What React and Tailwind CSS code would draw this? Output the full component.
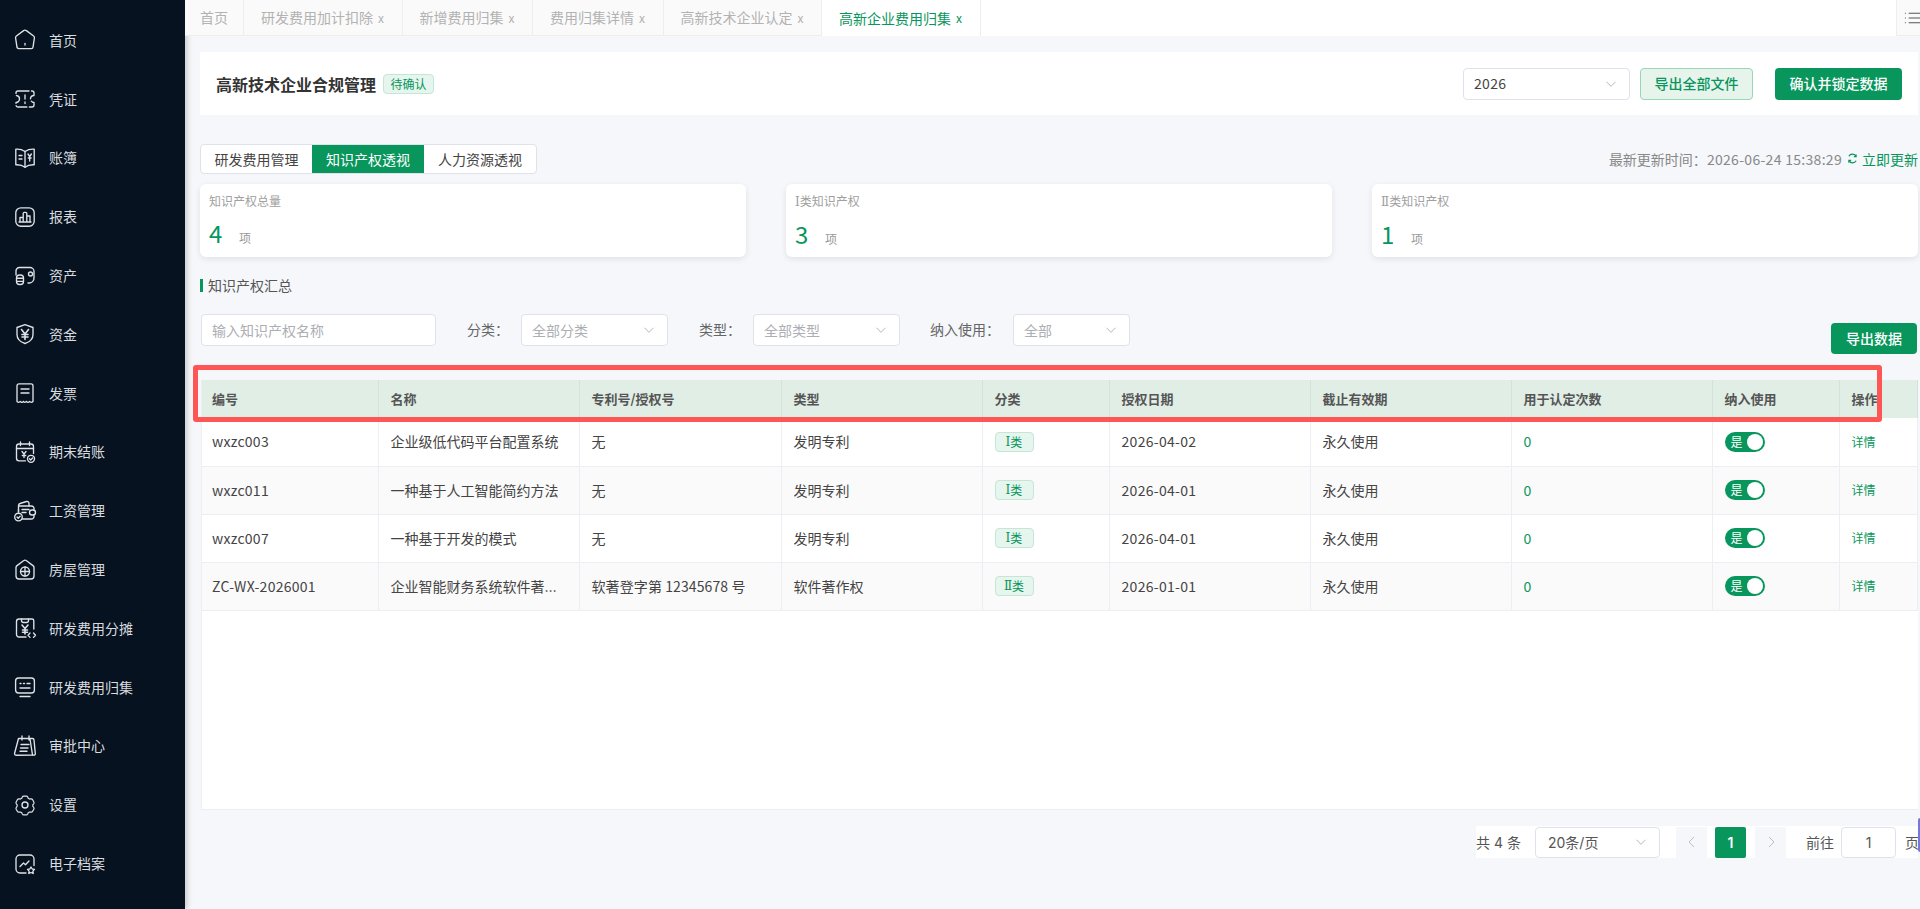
import React from "react";

const Ic = ({ children }) => (
  <svg width="24" height="24" viewBox="0 0 24 24" fill="none" stroke="#dfe2e6" strokeWidth="1.35" strokeLinecap="round" strokeLinejoin="round" className="shrink-0">
    {children}
  </svg>
);

const icons = [
  <Ic><path d="M10.6 2.6 3.4 8a2 2 0 0 0-.8 2l1.3 8.6A2 2 0 0 0 5.9 20.6h12.2a2 2 0 0 0 2-1.9L21.400 10a2 2 0 0 0-.8-2l-7.200-5.400a2.400 2.400 0 0 0-2.800 0Z" /><path d="M12 15.500v1.500" /></Ic>,
  <Ic><path d="M5 4h14a2 2 0 0 1 2 2v2.500a3.500 3.500 0 0 0 0 7V18a2 2 0 0 1-2 2H5a2 2 0 0 1-2-2v-2.500a3.500 3.500 0 0 0 0-7V6a2 2 0 0 1 2-2Z" strokeDasharray="11 2.500" /><path d="M12 8v4M12 15v1.500" /></Ic>,
  <Ic><path d="M12 5.500C9.500 3.800 6 3 2.800 3.200v15.600c3.400-.2 6.800.6 9.200 2.400 2.400-1.800 5.800-2.600 9.200-2.400V3.200C18 3 14.500 3.800 12 5.500Z" /><path d="M12 5.500v15.700M6 9.500h3M6 13h3M15 8l1.700 2.500L18.400 8M16.700 10.500V15M15.300 12h2.800" /></Ic>,
  <Ic><rect x="2.800" y="2.800" width="18.400" height="18.400" rx="5" /><path d="M7 17v-4.500h3.200V17M10.200 17V8.500a1.200 1.200 0 0 1 1.200-1.200h1.200a1.200 1.200 0 0 1 1.200 1.200V17M13.800 17v-6h3.200v6M6 17h12" /></Ic>,
  <Ic><path d="M3 11V7a3.500 3.500 0 0 1 3.500-3.500H17A4 4 0 0 1 21 7.500V14a5 5 0 0 1-4.500 5H15" /><circle cx="17.500" cy="10" r="2" /><rect x="3.500" y="11" width="7" height="9.500" rx="3" /><path d="M3.800 14.200h6.400M3.800 17.300h6.400" /></Ic>,
  <Ic><path d="M12 2.600 4 5.500v7c0 4.500 3.500 7.500 8 9 4.500-1.500 8-4.500 8-9v-7L12 2.600Z" /><path d="m8.500 7.500 3.500 4.500 3.500-4.500M12 12v5.500M9 12.500h6M9 15h6" strokeWidth="1.600" /></Ic>,
  <Ic><path d="M6 2.800h12a2 2 0 0 1 2 2v15.600c-1.200 1.200-2.300 1.200-3.300 0-1.200 1.300-2.300 1.300-3.300 0-1 1.200-2 1.200-2.900 0-1 1.300-2.100 1.300-3.200 0-1 1.200-2.100 1.200-3.300 0V4.800a2 2 0 0 1 2-2Z" /><path d="M8 8h8M8 12h8" /></Ic>,
  <Ic><path d="M12.500 20.800H6a2.500 2.500 0 0 1-2.500-2.500V6.500A2.500 2.500 0 0 1 6 4h12a2.500 2.500 0 0 1 2.500 2.500v7" /><path d="M7.500 2v3.500M16.500 2v3.500M3.500 8.500h17M9 11.500l2 2.500 2-2.500M11 14v3.500M9.300 15.500h3.400" /><circle cx="18" cy="18.800" r="3.500" /><path d="m16.500 18.800 1.200 1.200 1.900-2" /></Ic>,
  <Ic><path d="M5.500 13V6.500a2 2 0 0 1 1.500-2L13.500 2.500a2 2 0 0 1 2.500 2V7" /><path d="M6 7h12.500a2.500 2.500 0 0 1 2.500 2.500v1.500M21 16v1.500a2.500 2.500 0 0 1-2.500 2.500H9.500M5.500 13 5.500 10.500" /><path d="M9 10.500h7M9 13.500h4" /><rect x="16.500" y="11" width="6" height="5" rx="2.500" /><circle cx="5.500" cy="18" r="3.800" /><path d="m4 18 1.200 1.200 1.900-2" /></Ic>,
  <Ic><path d="M10.500 2.700 4 7.600A2.500 2.500 0 0 0 3 9.600V18a3 3 0 0 0 3 3h12a3 3 0 0 0 3-3V9.600a2.500 2.500 0 0 0-1-2l-6.500-4.900a2.500 2.500 0 0 0-3 0Z" /><circle cx="12" cy="13.500" r="4.500" /><path d="M7.500 13.500h9M12 9v9" /></Ic>,
  <Ic><path d="M13 21H6a2.500 2.500 0 0 1-2.500-2.500v-13A2.500 2.500 0 0 1 6 3h13a1.800 1.800 0 0 1 1.800 1.800V13" /><path d="M8.500 3v1.500a2 2 0 0 0 2 2h3a2 2 0 0 0 2-2V3" /><path d="m9 9 3 3.500 3-3.500M12 12.500V18M9.500 14h5M9.500 16.300h5" strokeWidth="1.600" /><path d="m17 17-2 2.200 2 2.200M20.500 17l2 2.200-2 2.200" /></Ic>,
  <Ic><rect x="2.600" y="3" width="18.800" height="15" rx="3" /><path d="M7 8.500h1M10.500 8.500h1M14 8.500h3M7 13h10M7 21.500h10" /></Ic>,
  <Ic><path d="M5.500 4.500h14a1.500 1.500 0 0 1 1.500 1.500l1.300 13.500a1.500 1.500 0 0 1-1.500 1.700H3a1.500 1.500 0 0 1-1.400-1.900L5.500 4.500Z" /><path d="M9 2v4M16 2v4M19.500 20.800 17 5M8 10.500h8M7.500 14h7.500M7 17.200h7" /></Ic>,
  <Ic><path d="M9 3.200c.3-.6 1-1 1.600-1h2.800c.7 0 1.300.4 1.600 1l.6 1.300 1.500.9 1.400-.2a2 2 0 0 1 2 1l1.300 2.400a2 2 0 0 1-.2 2.100l-.9 1.100v1.600l.9 1.200c.5.600.6 1.400.2 2.100l-1.300 2.300a2 2 0 0 1-2 1l-1.400-.2-1.500.9-.6 1.300c-.3.600-.9 1-1.600 1h-2.800c-.6 0-1.300-.4-1.600-1l-.6-1.300-1.500-.9-1.400.2a2 2 0 0 1-2-1l-1.300-2.300a2 2 0 0 1 .2-2.100l.9-1.200v-1.600l-.9-1.100a2 2 0 0 1-.2-2.100l1.300-2.400a2 2 0 0 1 2-1l1.400.2 1.500-.9.600-1.300Z" transform="translate(1.200 1.200) scale(.9)" /><circle cx="12" cy="12" r="3" /></Ic>,
  <Ic><path d="M13 21H7a4 4 0 0 1-4-4V7a4 4 0 0 1 4-4h10a4 4 0 0 1 4 4v6.500" /><path d="m7 14.500 3.500-3.500 2 1.800 3.500-3.800" /><path d="m18 15 1.200 2 2.300.4-1.600 1.700.3 2.400-2.200-1-2.200 1 .3-2.400-1.600-1.700 2.300-.4 1.200-2Z" /></Ic>,
];

const menu = ["首页", "凭证", "账簿", "报表", "资产", "资金", "发票", "期末结账", "工资管理", "房屋管理", "研发费用分摊", "研发费用归集", "审批中心", "设置", "电子档案"];

const tabs = [
  ["首页", false, false],
  ["研发费用加计扣除", true, false],
  ["新增费用归集", true, false],
  ["费用归集详情", true, false],
  ["高新技术企业认定", true, false],
  ["高新企业费用归集", true, true],
];

const Chevron = ({ className = "" }) => (
  <svg width="12" height="12" viewBox="0 0 12 12" fill="none" stroke="#b4b8c0" strokeWidth="1" className={className}>
    <path d="M1.500 3.800 6 8.300l4.500-4.500" />
  </svg>
);

const Select = ({ text, w, muted = true }) => (
  <div className={`flex h-[32px] items-center justify-between rounded-[4px] border border-[#dfe2ea] bg-white pl-[10px] pr-[12px] ${w}`}>
    <span className={muted ? "text-[14px] text-[#acaeb3]" : "text-[14px] tracking-[0.3px] text-[#444]"}>{text}</span>
    <Chevron />
  </div>
);

const Roman = ({ children }) => (
  <span className="font-['DejaVu_Serif','Noto_Sans_CJK_SC',serif]">{children}</span>
);

const Card = ({ label, value }) => (
  <div className="h-[73px] rounded-[6px] bg-white pl-[9px] pt-[8px] shadow-[0_2px_6px_rgba(0,0,0,0.09)]">
    <div className="text-[12px] leading-[18px] text-[#a0a0a0]">{label}</div>
    <div className="mt-[5px] flex items-baseline">
      <span className="w-[30px] text-[24px] leading-[36px] text-[#08965c]">{value}</span>
      <span className="text-[12px] text-[#999]">项</span>
    </div>
  </div>
);

const colW = ["w-[176px]", "w-[201px]", "w-[202px]", "w-[201px]", "w-[127px]", "w-[201px]", "w-[201px]", "w-[201px]", "w-[127px]", ""];
const headers = ["编号", "名称", "专利号/授权号", "类型", "分类", "授权日期", "截止有效期", "用于认定次数", "纳入使用", "操作"];
const rows = [
  ["wxzc003", "企业级低代码平台配置系统", "无", "发明专利", "Ⅰ", "2026-04-02"],
  ["wxzc011", "一种基于人工智能简约方法", "无", "发明专利", "Ⅰ", "2026-04-01"],
  ["wxzc007", "一种基于开发的模式", "无", "发明专利", "Ⅰ", "2026-04-01"],
  ["ZC-WX-2026001", "企业智能财务系统软件著作权", "软著登字第 12345678 号", "软件著作权", "Ⅱ", "2026-01-01"],
];

const cell = "border-r border-[#eceef4] px-[12px] text-left font-normal first:pl-[10px]";

export default function App() {
  return (
    <div className="relative flex h-[909px] w-[1920px] overflow-hidden bg-[#f5f7fa] font-['Noto_Sans_CJK_SC',sans-serif] text-[14px] text-[#333]">
      <aside className="flex w-[185px] shrink-0 flex-col bg-[#06121f] pl-[13px] pt-[11px] shadow-[2px_0_6px_rgba(0,0,0,0.2)]">
        {menu.map((m, i) => (
          <div key={m} className="flex h-[58.8px] shrink-0 items-center gap-[12px] text-[14px] text-[#d8dbdf]">
            {icons[i]}
            <span>{m}</span>
          </div>
        ))}
      </aside>

      <main className="flex min-w-0 flex-1 flex-col">
        <div className="flex h-[36px] shrink-0 bg-white">
          {tabs.map(([t, closable, active], i) => (
            <div key={t} className={`flex items-center whitespace-nowrap border-r border-[#eeeeee] ${i === 0 ? "px-[15px]" : "pl-[17px] pr-[16px]"} ${active ? "bg-white text-[#08965c]" : "border-b bg-[#fafafa] text-[#b2b2b2]"}`}>
              <span>{t}</span>
              {closable && <span className="ml-[5px] w-[7.5px] text-[12px] leading-none">x</span>}
            </div>
          ))}
          <div className="flex-1" />
          <div className="flex w-[24px] items-center justify-center border-b border-l border-[#eeeeee] bg-[#fafafa] pl-[6px]">
            <svg width="18" height="18" viewBox="0 0 18 18" fill="none" stroke="#555" strokeWidth="1.200">
              <path d="M2 4h1M2 9h1M2 14h1M6 4h12M6 9h12M6 14h12" />
            </svg>
          </div>
        </div>

        <div className="flex min-h-0 flex-1 flex-col pl-[15px] pr-[2px]">
          <div className="mt-[16px] flex h-[63px] shrink-0 items-center bg-white pl-[16px] pr-[15px]">
            <span className="text-[16px] font-semibold text-[#333]">高新技术企业合规管理</span>
            <span className="ml-[7px] flex h-[20px] w-[51px] items-center justify-center rounded-[4px] border border-[#c4e6d5] bg-[#e6f5ed] text-[12px] text-[#08965c]">待确认</span>
            <div className="flex-1" />
            <Select text="2026" w="w-[167px]" muted={false} />
            <button className="ml-[10px] h-[32px] w-[113px] rounded-[4px] border border-[#9bd5b9] bg-[#e6f4ec] text-[14px] font-medium text-[#08965c]">导出全部文件</button>
            <button className="ml-[22px] mr-[1px] h-[32px] w-[127px] rounded-[4px] bg-[#08965c] text-[14px] font-medium text-white">确认并锁定数据</button>
          </div>

          <div className="mt-[29px] flex h-[30px] shrink-0 items-center justify-between">
            <div className="flex h-[30px] overflow-hidden rounded-[4px] border border-[#dfe2ea] bg-white text-[14px]">
              <div className="flex w-[111px] items-center justify-center text-[#444]">研发费用管理</div>
              <div className="flex w-[112px] items-center justify-center bg-[#08965c] text-white">知识产权透视</div>
              <div className="flex w-[112px] items-center justify-center text-[#444]">人力资源透视</div>
            </div>
            <div className="flex items-center text-[14px] text-[#888]">
              <span>最新更新时间：</span>
              <span className="tracking-[0.3px]">2026-06-24 15:38:29</span>
              <svg width="11" height="11" viewBox="0 0 24 24" fill="none" stroke="#08965c" strokeWidth="2.500" className="mb-[2px] ml-[5px]">
                <path d="M20 8a9 9 0 0 0-16-1M4 16a9 9 0 0 0 16 1M20 3v5h-5M4 21v-5h5" />
              </svg>
              <span className="ml-[4px] text-[14px] text-[#08965c]">立即更新</span>
            </div>
          </div>

          <div className="mt-[10px] grid shrink-0 grid-cols-3 gap-[40px]">
            <Card label="知识产权总量" value="4" />
            <Card label={<><Roman>Ⅰ</Roman>类知识产权</>} value="3" />
            <Card label={<><Roman>Ⅱ</Roman>类知识产权</>} value="1" />
          </div>

          <div className="mt-[17px] flex h-[22px] shrink-0 items-center">
            <span className="h-[13px] w-[3px] bg-[#08965c]" />
            <span className="ml-[5px] text-[14px] text-[#555]">知识产权汇总</span>
          </div>

          <div className="mt-[18px] flex h-[40px] shrink-0 items-start pl-[1px]">
            <div className="flex h-[32px] w-[235px] items-center rounded-[4px] border border-[#dfe2ea] bg-white pl-[10px] text-[14px] text-[#acaeb3]">输入知识产权名称</div>
            <span className="ml-[31px] mt-[5px] text-[14px] text-[#666]">分类：</span>
            <div className="ml-[12px]"><Select text="全部分类" w="w-[147px]" /></div>
            <span className="ml-[31px] mt-[5px] text-[14px] text-[#666]">类型：</span>
            <div className="ml-[12px]"><Select text="全部类型" w="w-[147px]" /></div>
            <span className="ml-[30px] mt-[5px] text-[14px] text-[#666]">纳入使用：</span>
            <div className="ml-[13px]"><Select text="全部" w="w-[117px]" /></div>
            <div className="flex-1" />
            <button className="mr-[1px] mt-[9px] h-[31px] w-[86px] rounded-[4px] bg-[#08965c] text-[14px] font-medium text-white">导出数据</button>
          </div>

          <div className="ml-[1px] mt-[26px] h-[430px] shrink-0 border-b border-l border-[#eceef4] bg-white">
            <table className="w-full table-fixed border-collapse">
              <colgroup>
                {colW.map((w, i) => <col key={i} className={w} />)}
              </colgroup>
              <thead>
                <tr className="h-[38px] bg-[#e0eee5]">
                  {headers.map((h) => (
                    <th key={h} className="border-r border-[#d3e3d9] px-[12px] text-left text-[13px] font-semibold text-[#555] first:pl-[10px]">{h}</th>
                  ))}
                </tr>
              </thead>
              <tbody>
                {rows.map((r, i) => (
                  <tr key={r[0]} className={`h-[48px] border-b border-[#eceef4] ${i % 2 ? "bg-[#fafafa]" : "bg-white"}`}>
                    <td className={`${cell} text-[14px] tracking-[0.25px] text-[#444]`}>{r[0]}</td>
                    <td className={`${cell} truncate font-['Inter','Noto_Sans_CJK_SC',sans-serif] text-[14px] text-[#444]`}>{r[1]}</td>
                    <td className={`${cell} whitespace-nowrap text-[14px] tracking-[0.1px] text-[#444]`}>{r[2]}</td>
                    <td className={`${cell} text-[14px] text-[#444]`}>{r[3]}</td>
                    <td className={cell}>
                      <span className="flex h-[20px] w-[39px] items-center justify-center rounded-[4px] border border-[#c4e6d5] bg-[#e6f5ed] text-[12px] text-[#08965c]"><Roman>{r[4]}</Roman>类</span>
                    </td>
                    <td className={`${cell} text-[14px] tracking-[0.3px] text-[#444]`}>{r[5]}</td>
                    <td className={`${cell} text-[14px] text-[#444]`}>永久使用</td>
                    <td className={`${cell} text-[14px] text-[#08965c]`}>0</td>
                    <td className={cell}>
                      <span className="flex h-[20px] w-[40px] items-center justify-between rounded-full bg-[#08965c] pl-[6px] pr-[2px] text-[12px] text-white">
                        <span>是</span>
                        <span className="h-[16px] w-[16px] rounded-full bg-white" />
                      </span>
                    </td>
                    <td className={`${cell} text-[12px] text-[#08965c]`}>详情</td>
                  </tr>
                ))}
              </tbody>
            </table>
          </div>

          <div className="mt-[16px] flex h-[32px] shrink-0 justify-end font-['Inter','Noto_Sans_CJK_SC',sans-serif]">
            <div className="flex items-center bg-white text-[14px] text-[#555]">
              <span className="w-[59px]">共 4 条</span>
              <div className="flex h-[31px] w-[125px] items-center justify-between rounded-[4px] border border-[#dfe2ea] bg-white pl-[12px] pr-[12px]">
                <span>20条/页</span>
                <Chevron />
              </div>
              <div className="ml-[16px] flex h-[31px] w-[31px] items-center justify-center bg-[#f5f7fa]">
                <svg width="10" height="12" viewBox="0 0 10 12" fill="none" stroke="#bbbec4"><path d="M7 1 2 6l5 5" /></svg>
              </div>
              <div className="ml-[8px] flex h-[31px] w-[31px] items-center justify-center rounded-[2px] bg-[#08965c] font-semibold text-white">1</div>
              <div className="ml-[9px] flex h-[31px] w-[31px] items-center justify-center bg-[#f5f7fa]">
                <svg width="10" height="12" viewBox="0 0 10 12" fill="none" stroke="#bbbec4"><path d="m3 1 5 5-5 5" /></svg>
              </div>
              <span className="ml-[20px] w-[35px]">前往</span>
              <div className="flex h-[31px] w-[55px] items-center justify-center rounded-[4px] border border-[#dfe2ea] bg-white">1</div>
              <span className="ml-[9px] w-[13px] overflow-hidden whitespace-nowrap">页</span>
            </div>
          </div>
        </div>
      </main>

      <div className="pointer-events-none absolute left-[193px] top-[365px] h-[57px] w-[1689px] rounded-[3px] border-[5px] border-[#ff5555]" />
      <div className="absolute right-0 top-[818px] h-[34px] w-[2px] rounded-l-full bg-[#7478dc]" />
    </div>
  );
}
